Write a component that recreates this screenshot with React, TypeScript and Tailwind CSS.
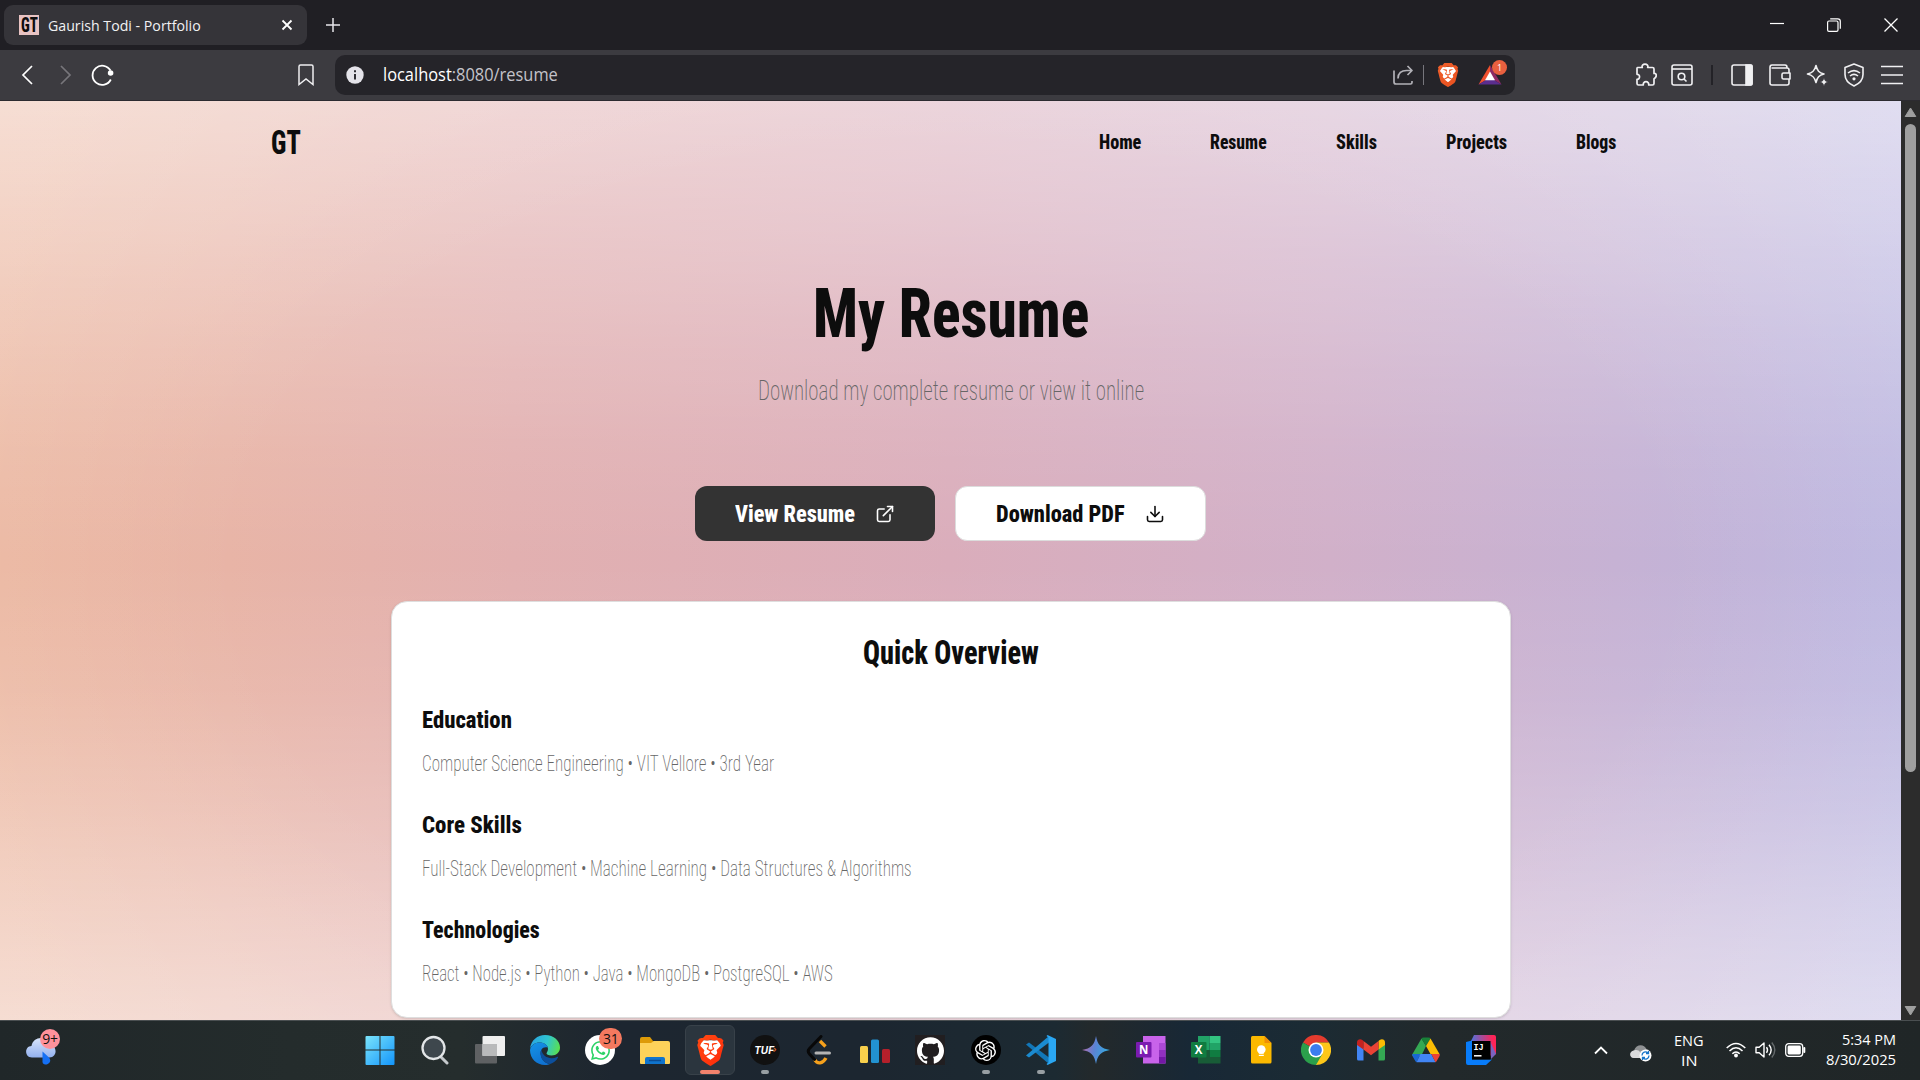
import React, { useLayoutEffect, useRef, useState } from "react";
import { SiBrave, SiGithub, SiOpenai, SiWhatsapp } from "react-icons/si";
import { Download, ExternalLink } from "lucide-react";

type FitProps = { className: string; children: React.ReactNode };

/* Squeezes one line of text to the width that its class gives it. */
function Fit({ className, children }: FitProps) {
  const outer = useRef<HTMLSpanElement>(null);
  const inner = useRef<HTMLSpanElement>(null);
  const [scale, setScale] = useState(1);
  useLayoutEffect(() => {
    if (outer.current && inner.current) {
      setScale(outer.current.offsetWidth / inner.current.offsetWidth);
    }
  }, []);
  return (
    <span ref={outer} className={"block shrink-0 " + className}>
      <span ref={inner} className="inline-block origin-left whitespace-nowrap" style={{ transform: `scaleX(${scale})` }}>
        {children}
      </span>
    </span>
  );
}

const heavy = "font-['Roboto',sans-serif] font-extrabold [font-stretch:75%] text-[#0d0d0d] ";
const light = "font-['Roboto',sans-serif] font-extralight [font-stretch:75%] text-[#666666] ";
const ui = "font-['Open_Sans',sans-serif] ";

function TabBar() {
  return (
    <div className="flex h-[50px] items-center bg-[#201f24] text-white">
      <div className="ml-1 flex h-10 w-[303px] items-center rounded-[9px] bg-[#353439] pl-[15px]">
        <div className="flex h-5 w-5 items-center justify-center bg-[#e8c3c3]">
          <Fit className={heavy + "w-[17px] text-[21px] leading-5"}>GT</Fit>
        </div>
        <Fit className={ui + "mb-px ml-[9px] w-[153px] text-[15px] leading-5 text-[#f1f1f3]"}>Gaurish Todi - Portfolio</Fit>
        <svg className="ml-auto mr-[14px]" width="12" height="12" viewBox="0 0 12 12">
          <path d="M1.5 1.5l9 9m0-9l-9 9" stroke="#fff" strokeWidth="1.8" />
        </svg>
      </div>
      <svg className="ml-[19px]" width="14" height="14" viewBox="0 0 14 14">
        <path d="M7 0v14M0 7h14" stroke="#e6e6ea" strokeWidth="1.5" />
      </svg>
      <div className="ml-auto mr-[22px] flex items-center gap-[43px]">
        <svg width="14" height="14" viewBox="0 0 14 14"><path d="M0 5.5h14" stroke="#fff" strokeWidth="1.2" /></svg>
        <svg width="14" height="14" viewBox="0 0 14 14" fill="none" stroke="#fff">
          <rect x=".6" y="3" width="10.4" height="10.4" rx="1.4" strokeWidth="1.2" />
          <path d="M3.2.8h7.6a2.5 2.5 0 0 1 2.5 2.5v7.5" strokeWidth="1.2" />
        </svg>
        <svg width="14" height="14" viewBox="0 0 14 14"><path d="M.5.5l13 13m0-13l-13 13" stroke="#fff" strokeWidth="1.3" /></svg>
      </div>
    </div>
  );
}

function BraveLion({ size, from, to }: { size: number; from: string; to: string }) {
  return (
    <span className="grid place-items-center">
      <svg className="col-start-1 row-start-1" width={size} height={size} viewBox="0 0 24 24">
        <defs>
          <linearGradient id={"bl" + size} x1="0" y1="0" x2="1" y2="1">
            <stop offset="0" stopColor={from} />
            <stop offset="1" stopColor={to} />
          </linearGradient>
        </defs>
        <path d="M5 4h14l1.5 5-3 9-5.500 4-5.500-4-3-9z" fill="#fff" />
      </svg>
      <SiBrave className="col-start-1 row-start-1" size={size} fill={`url(#bl${size})`} />
    </span>
  );
}

function Toolbar() {
  return (
    <div className="flex h-[51px] items-center border-b border-[#2c2b30] bg-[#3c3b40]">
      <svg className="ml-[21px]" width="13" height="20" viewBox="0 0 13 20" fill="none"><path d="M11 1L2 10l9 9" stroke="#fff" strokeWidth="1.7" /></svg>
      <svg className="ml-[25px]" width="13" height="20" viewBox="0 0 13 20" fill="none"><path d="M2 1l9 9-9 9" stroke="#77767b" strokeWidth="1.7" /></svg>
      <svg className="ml-[19px]" width="24" height="22" viewBox="0 0 24 22" fill="none">
        <path d="M19.800 15.500A9.600 9.600 0 1 1 19.500 6.500" stroke="#fff" strokeWidth="1.8" />
        <circle cx="19.600" cy="9" r="2.800" fill="#fff" />
      </svg>
      <svg className="ml-[183px]" width="16" height="22" viewBox="0 0 16 22" fill="none">
        <path d="M2.500 1h11a1.500 1.500 0 0 1 1.500 1.500V20.500l-7-5.500-7 5.500V2.500A1.500 1.500 0 0 1 2.500 1z" stroke="#eeeef0" strokeWidth="1.5" />
      </svg>
      <div className="ml-[21px] flex h-10 w-[1180px] shrink-0 items-center rounded-[10px] bg-[#252429]">
        <svg className="ml-[11px]" width="18" height="18" viewBox="0 0 18 18">
          <circle cx="9" cy="9" r="8.700" fill="#e4e3e9" />
          <path d="M9 8v5.500M9 4.300v2" stroke="#252429" strokeWidth="1.900" />
        </svg>
        <Fit className={ui + "mb-[2px] ml-[19px] w-[175px] text-[18px] leading-6 text-[#c4c3ca]"}>
          <span className="text-white">localhost</span>:8080/resume
        </Fit>
        <svg className="ml-auto" width="21" height="20" viewBox="0 0 21 20" fill="none" stroke="#b2b1b7" strokeWidth="1.700" strokeLinejoin="round">
          <path d="M1 5.500V17a2 2 0 0 0 2 2h14.500a1.500 1.500 0 0 0 1.500-1.500V16" />
          <path d="M5 13.500C5 8 8.500 5.500 13.500 5.500H19M14.500 1L19 5.500 14.500 10" />
        </svg>
        <div className="ml-[9px] h-5 w-[1.5px] bg-[#77767c]" />
        <div className="ml-3"><BraveLion size={24} from="#f0602c" to="#e8501e" /></div>
        <div className="relative ml-[18px] mr-[13px] h-6 w-6">
          <svg width="24" height="24" viewBox="0 0 24 24">
            <path d="M12 2L.5 21.500 8 17l4-7.500z" fill="#f0502f" />
            <path d="M12 2l11.500 19.500L16 17l-4-7.500z" fill="#8e2a63" />
            <path d="M.5 21.500h23L16 17H8z" fill="#5b2d8e" />
            <path d="M12 8.500l5 8.800H7z" fill="#fff" />
          </svg>
          <div className="absolute -top-[3px] left-[14px] flex h-[15px] w-[15px] items-center justify-center rounded-full bg-[#e8603f] font-['Open_Sans',sans-serif] text-[9px] leading-none text-white">1</div>
        </div>
      </div>
      <div className="ml-auto mr-[17px] flex items-center">
        <svg width="22" height="24" viewBox="0 0 22 24" fill="none" stroke="#f0f0f2" strokeWidth="1.700" strokeLinejoin="round">
          <path d="M2.500 4.500H7.300C6.500 2.500 8 1.200 10 1.200s3.500 1.300 2.700 3.300h4.800a1.500 1.500 0 0 1 1.500 1.500v4.500c3-.8 3 4 0 5.300v4.700a1.500 1.500 0 0 1-1.500 1.500h-3.800c.3-2-1-3.300-2.700-3.300s-3 1.300-2.700 3.300H3.500A1.500 1.500 0 0 1 2 20.500v-4.200c3.400.3 3.400-5.300 0-5V5z" />
        </svg>
        <svg className="ml-[14px]" width="22" height="22" viewBox="0 0 22 22" fill="none" stroke="#f0f0f2" strokeWidth="1.600">
          <rect x="1" y="1" width="20" height="20" rx="2" /><path d="M1 5h20" /><circle cx="10.500" cy="12.500" r="3.300" /><path d="M13 15l2.500 2.500" />
        </svg>
        <div className="ml-[18px] h-5 w-[2px] bg-[#232227]" />
        <svg className="ml-[18px]" width="22" height="22" viewBox="0 0 22 22" fill="none" stroke="#f0f0f2" strokeWidth="1.600">
          <rect x="1" y="1" width="20" height="20" rx="2" /><path d="M15 1h5q1 0 1 1v18q0 1-1 1h-5z" fill="#f0f0f2" />
        </svg>
        <svg className="ml-[16px]" width="22" height="22" viewBox="0 0 22 22" fill="none" stroke="#f0f0f2" strokeWidth="1.600" strokeLinejoin="round">
          <path d="M1 3.500V19a2 2 0 0 0 2 2h15a2 2 0 0 0 2-2V6a2 2 0 0 0-2-2H2.500M1 3.500C1 2 2 1 3 1h13q2 0 2 2.500" /><path d="M21 9h-6.500a1.500 1.500 0 0 0-1.500 1.500v3a1.500 1.500 0 0 0 1.500 1.500H21z" fill="#3c3b40" />
        </svg>
        <svg className="ml-[15px]" width="23" height="23" viewBox="0 0 23 23" fill="none" stroke="#f0f0f2" strokeWidth="1.600" strokeLinejoin="round">
          <path d="M10 1.500c1.200 5.300 3 7.200 8 8.500-5 1.300-6.800 3.200-8 8.500-1.200-5.300-3.500-7.200-8.500-8.500 5-1.300 7.300-3.200 8.500-8.500z" />
          <path d="M18 14c.6 2.500 1.300 3.200 4 4-2.700.8-3.400 1.500-4 4-.6-2.500-1.300-3.200-4-4 2.700-.8 3.400-1.500 4-4z" fill="#f0f0f2" stroke="#3c3b40" strokeWidth=".5" />
        </svg>
        <svg className="ml-[15px]" width="20" height="24" viewBox="0 0 20 24" fill="none" stroke="#f0f0f2" strokeWidth="1.600">
          <path d="M10 1l9 3.500v7c0 5.500-4 9.300-9 11.500-5-2.200-9-6-9-11.500v-7z" strokeLinejoin="round" />
          <path d="M4 10q6-4.800 12 0M6 13q4-3.200 8 0" /><circle cx="10" cy="15.800" r="1.600" fill="#f0f0f2" stroke="none" />
        </svg>
        <svg className="ml-[17px]" width="22" height="20" viewBox="0 0 22 20" fill="none" stroke="#f0f0f2" strokeWidth="1.600"><path d="M0 1.500h22M0 10h22M0 18.500h22" /></svg>
      </div>
    </div>
  );
}

const navItems = [
  ["Home", "w-[42px]"],
  ["Resume", "w-[57px]"],
  ["Skills", "w-[41px]"],
  ["Projects", "w-[61px]"],
  ["Blogs", "w-[40px]"],
];

const sections = [
  ["Education", "w-[90px]", "Computer Science Engineering • VIT Vellore • 3rd Year", "w-[352px]"],
  ["Core Skills", "w-[100px]", "Full-Stack Development • Machine Learning • Data Structures & Algorithms", "w-[490px]"],
  ["Technologies", "w-[118px]", "React • Node.js • Python • Java • MongoDB • PostgreSQL • AWS", "w-[411px]"],
];

function Page() {
  return (
    <main className="flex min-w-0 flex-1 flex-col items-center bg-[radial-gradient(ellipse_62%_75%_at_50%_51%,rgba(255,255,255,0)_60%,rgba(255,255,255,0.18)_110%),linear-gradient(180deg,rgba(255,255,255,0.47)_0%,rgba(255,255,255,0.34)_12%,rgba(255,255,255,0.2)_25%,rgba(255,255,255,0.07)_38%,rgba(255,255,255,0)_50%,rgba(255,255,255,0.07)_64%,rgba(255,255,255,0.2)_77%,rgba(255,255,255,0.34)_89%,rgba(255,255,255,0.46)_100%),linear-gradient(90deg,#ebb59e_0%,#e8b4a6_12%,#e2b0b0_27%,#daadbb_50%,#d1b0c9_70%,#c6b2d4_85%,#bab4df_100%)]">
      <header className="flex h-[82px] w-full items-center justify-between pl-[271px] pr-[285px]">
        <Fit className={heavy + "mb-px w-[30px] text-[34px] leading-10"}>GT</Fit>
        <nav className="flex gap-[69px] pt-[2px]">
          {navItems.map(([label, w]) => (
            <Fit key={label} className={heavy + w + " text-[19.5px] leading-6"}>{label}</Fit>
          ))}
        </nav>
      </header>
      <Fit className={heavy + "mt-[91px] w-[276px] text-[68px] leading-[80px]"}>My Resume</Fit>
      <Fit className={light + "mt-[19px] w-[386px] text-[27px] leading-9"}>Download my complete resume or view it online</Fit>
      <div className="mt-[77px] flex gap-5">
        <div className="flex h-[55px] w-[240px] items-center rounded-xl bg-[#333333] pl-10">
          <Fit className="w-[120px] font-['Roboto',sans-serif] text-[24.5px] leading-8 font-extrabold text-white [font-stretch:75%]">View Resume</Fit>
          <ExternalLink className="ml-5 text-white" size={20} strokeWidth={1.9} />
        </div>
        <div className="flex h-[55px] w-[251px] items-center rounded-xl border border-[#dcdcdc] bg-white pl-10">
          <Fit className={heavy + "w-[129px] text-[24.5px] leading-8"}>Download PDF</Fit>
          <Download className="ml-5 text-[#0d0d0d]" size={20} strokeWidth={1.9} />
        </div>
      </div>
      <section className="mt-[60px] flex h-[417px] w-[1120px] flex-col rounded-2xl border border-[#dedede] bg-white px-[30px] pt-[31px] shadow-sm">
        <Fit className={heavy + "w-[176px] self-center text-[33.5px] leading-10"}>Quick Overview</Fit>
        {sections.map(([title, tw, text, w], i) => (
          <div key={title} className="mt-8">
            <Fit className={heavy + tw + " text-[24.5px] leading-[30px]"}>{title}</Fit>
            <Fit className={light + w + " mt-[15px] text-[22px] leading-7"}>{text}</Fit>
          </div>
        ))}
      </section>
    </main>
  );
}

function Scrollbar() {
  return (
    <div className="flex w-[19px] flex-col items-center bg-[#2c2c2c]">
      <svg className="mt-[5px]" width="13" height="12" viewBox="0 0 13 12"><path d="M6.500 2L11.800 10.500H1.200z" fill="#9f9f9f" stroke="#9f9f9f" strokeLinejoin="round" /></svg>
      <div className="mt-[6px] h-[648px] w-[11px] rounded-full bg-[#9f9f9f]" />
      <svg className="mb-[3px] mt-auto" width="13" height="12" viewBox="0 0 13 12"><path d="M6.500 10L11.800 1.500H1.200z" fill="#9f9f9f" stroke="#9f9f9f" strokeLinejoin="round" /></svg>
    </div>
  );
}

const S = (p: { children: React.ReactNode }) => (
  <svg width="30" height="30" viewBox="0 0 30 30" fill="none">{p.children}</svg>
);

const taskIcons: { id: string; icon: React.ReactNode; mark?: "active" | "open" }[] = [
  { id: "start", icon: <S>
    <defs><linearGradient id="win" x1="0" y1="0" x2="30" y2="30" gradientUnits="userSpaceOnUse"><stop stopColor="#7de6fb" /><stop offset="1" stopColor="#1294fb" /></linearGradient></defs>
    <path d="M.5 2Q.5 1 1.500 1H14.500V14.500H.5zM15.500 1H28.500Q29.500 1 29.500 2V14.500H15.500zM.5 15.500H14.500V30H1.500Q.5 30 .5 29zM15.500 15.500H29.500V29Q29.500 30 28.500 30H15.500z" fill="url(#win)" /></S> },
  { id: "search", icon: <S><path d="M21 22l6 6" stroke="#c5c9cc" strokeWidth="3" strokeLinecap="round" /><circle cx="13.500" cy="13" r="11" fill="#3e474d" stroke="#e3e6e8" strokeWidth="2.300" /></S> },
  { id: "tasks", icon: <S>
    <rect x="0" y="9" width="22" height="19.500" rx="1" fill="#5f6163" /><rect x="7.500" y="1" width="22.500" height="20" rx="1" fill="#efefef" /><path d="M7.500 9H22v12H7.500z" fill="#b9babb" /></S> },
  { id: "edge", icon: <S>
    <defs>
      <linearGradient id="e1" x1="2" y1="8" x2="29" y2="16" gradientUnits="userSpaceOnUse"><stop stopColor="#2aa8e0" /><stop offset=".5" stopColor="#2fc5d0" /><stop offset="1" stopColor="#5be04c" /></linearGradient>
      <linearGradient id="e2" x1="4" y1="8" x2="16" y2="30" gradientUnits="userSpaceOnUse"><stop stopColor="#1490e4" /><stop offset="1" stopColor="#0f6fd0" /></linearGradient>
    </defs>
    <path d="M0 14C1 5 7.500 0 15 0c9 0 15 6 15 12.500 0 4.500-3.500 8-8.500 8-3.500 0-5-1.200-5-2.200 0-.8 1.500-1.800 1.500-4.300C18 10 14 7.500 9.500 7.500 5 7.500 1.500 10 0 14z" fill="url(#e1)" />
    <path d="M0 15C1 10 5 7.500 9.500 7.500c4 0 7.500 2 8.300 5-5-1.500-8 2.500-7 7.500 1 5.500 5.500 9 10 8.800C19 29.700 17 30 15 30 6.500 30 0 23.500 0 15z" fill="url(#e2)" />
    <path d="M11.300 14.500C9 20 12 28 20 29c3.500-1 6.500-3.500 8-6.500.3-.8-.3-1-1-.6-6 3-14.500.6-15.700-7.400z" fill="#0c4f9c" /></S> },
  { id: "whatsapp", icon: <div className="relative flex h-[30px] w-[30px] items-center justify-center rounded-full bg-white">
    <SiWhatsapp size={19} className="text-[#2bd366]" />
    <div className="absolute -top-[7px] left-[14px] flex h-[21px] w-[23px] items-center justify-center rounded-full bg-[#f4795f] font-['Open_Sans',sans-serif] text-[14px] leading-none tracking-tight text-[#111]">31</div></div> },
  { id: "files", icon: <S>
    <path d="M0 4q0-2 2-2h8l3 4H28v10H0z" fill="#dd9b08" /><path d="M0 8h11l3-2H28q2 0 2 2V28q0 1-1 1H1q-1 0-1-1z" fill="#fdd25a" /><path d="M5 29v-5q0-2 2-2H23q2 0 2 2v5z" fill="#1074cd" /><path d="M9 25.500H21" stroke="#0b4c94" strokeWidth="1.500" /></S> },
  { id: "brave", mark: "active", icon: <BraveLion size={31} from="#ff4a12" to="#ff2a0a" /> },
  { id: "tuf", mark: "open", icon: <div className="flex h-[30px] w-[30px] items-center justify-center rounded-full bg-[#111] font-['Inter',sans-serif] text-[10px] leading-none font-bold italic text-white">TUF<span className="-ml-px -mt-[2px] text-[8px] text-[#e36a2c]">›</span></div> },
  { id: "leetcode", icon: <S>
    <g transform="translate(1 0)"><path d="M14 6l5.500 5.500" stroke="#f5a01c" strokeWidth="3.400" /><path d="M8.500 24.500c3 5 8 4.500 11.500-1.500" stroke="#f5a01c" strokeWidth="3.400" /><path d="M15 1.500L3.500 13.500q-2.500 2.500 0 5.500l5 5.500" stroke="#080808" strokeWidth="3" strokeLinecap="round" /><path d="M10 18H23.500" stroke="#b3b3b3" strokeWidth="3" strokeLinecap="round" /></g></S> },
  { id: "codeforces", icon: <S>
    <rect x="0" y="11" width="8" height="17" rx="1.500" fill="#f8cf4c" /><rect x="11" y="4.500" width="8" height="23.500" rx="1.500" fill="#2292d1" /><rect x="22" y="14" width="8" height="14" rx="1.500" fill="#b4202b" /></S> },
  { id: "github", icon: <div className="flex h-[30px] w-[30px] items-center justify-center bg-[#211e20]"><SiGithub size={27} className="text-white" /></div> },
  { id: "chatgpt", mark: "open", icon: <div className="flex h-[30px] w-[30px] items-center justify-center rounded-full bg-black"><SiOpenai size={21} className="text-white" /></div> },
  { id: "vscode", mark: "open", icon: <S>
    <path d="M0 9.500L3 7.500 23 22.500V29z" fill="#1277b8" /><path d="M0 20.500l3 2L23 7.500V1z" fill="#1b8bd0" /><path d="M21.500 0L30 4V26l-8.500 4-1-1 2-1.500V2.500l-2-1.500z" fill="#2aa7f3" /></S> },
  { id: "gemini", icon: <S>
    <defs><linearGradient id="gem" x1="1" y1="10" x2="29" y2="16" gradientUnits="userSpaceOnUse"><stop stopColor="#b96aa9" /><stop offset=".45" stopColor="#5b83d4" /><stop offset="1" stopColor="#30aee0" /></linearGradient></defs>
    <path d="M15 1c1.500 9 5 12.500 14 14-9 1.500-12.500 5-14 14C13.500 20 10 16.500 1 15 10 13.500 13.500 10 15 1z" fill="url(#gem)" /></S> },
  { id: "onenote", icon: <S>
    <path d="M7 1H29.500V28.500H7z" fill="#c863ea" /><path d="M23 8h6.500v7H23z" fill="#ad48d6" /><path d="M23 15h6.500v7H23z" fill="#9230c0" /><path d="M23 22h6.500v6.500H23z" fill="#7418a6" /><rect x="0" y="7" width="15.500" height="15.500" rx="1" fill="#7b1bb0" />
    <text x="7.700" y="18.800" textAnchor="middle" fontFamily="Open Sans, sans-serif" fontWeight="700" fontSize="11.500" fill="#fff">N</text></S> },
  { id: "excel", icon: <S>
    <path d="M7 1H18.500v14H7z" fill="#21a366" /><path d="M18.500 1H29.500v7h-11z" fill="#33c481" /><path d="M18.500 8H29.500v7h-11z" fill="#21a366" /><path d="M7 15H18.500v7H7z" fill="#185c37" /><path d="M18.500 15H29.500v7h-11z" fill="#107c41" /><path d="M7 22H29.500v6.500H7z" fill="#185c37" /><rect x="0" y="7" width="15.500" height="15.500" rx="1" fill="#107c41" />
    <text x="7.700" y="18.800" textAnchor="middle" fontFamily="Open Sans, sans-serif" fontWeight="700" fontSize="11.500" fill="#fff">X</text></S> },
  { id: "keep", icon: <S>
    <path d="M6.500 1H18.500L25.500 8V27q0 1.500-1.500 1.500H6.500Q5 28.500 5 27V2.500Q5 1 6.500 1z" fill="#fcb900" /><path d="M18.500 1v7h7z" fill="#f08f05" /><circle cx="15.300" cy="14.500" r="4.300" fill="#fff" /><path d="M12.800 17h5v1.700h-5zM12.800 19.700h5v1.400h-5z" fill="#fff" /></S> },
  { id: "chrome", icon: <S>
    <path d="M15 15L2 7.500A15 15 0 0 1 28 7.500H15z" fill="#e33b2e" /><path d="M15 15V7.500H28A15 15 0 0 1 15 30z" fill="#fdc719" /><path d="M15 15l6.500 3.700L15 30A15 15 0 0 1 2 7.500z" fill="#2b9f4b" /><circle cx="15" cy="15" r="7.500" fill="#fff" /><circle cx="15" cy="15" r="5.900" fill="#3b7ded" /></S> },
  { id: "gmail", icon: <S>
    <path d="M1 8v16q0 1.500 1.500 1.500H7.500V13z" fill="#4285f4" /><path d="M22.500 13v12.500h5q1.500 0 1.500-1.500V8z" fill="#34a853" /><path d="M1 10V7.500C1 4.500 4.300 3.500 6.300 5L7.500 6v8.500z" fill="#c5221f" /><path d="M22.500 6l1.200-1C26 3.500 29 4.500 29 7.500V10l-6.500 4.500z" fill="#fbbc04" /><path d="M7.500 6L15 11.700 22.500 6v8.500L15 20.300 7.500 14.500z" fill="#ea4335" /></S> },
  { id: "drive", icon: <S>
    <path d="M10.500 3.500L1.500 19q-.5 1 0 2h8.700L15 11z" fill="#34a853" /><path d="M10.500 3.500Q11 2.500 12.500 2.500h5q1.500 0 2 1L15 11z" fill="#188038" /><path d="M19.500 3.500l9 15.500H19.500L15 11z" fill="#fbbc04" /><path d="M1.300 19H9.500L5.500 27.200Q4.800 27 4.300 26L1.700 21.500Q1 20 1.300 19z" fill="#1967d2" /><path d="M9.500 19h10.800l4.200 8.200H5.500z" fill="#4285f4" /><path d="M20.300 19h8.500q.3 1-.5 2.500l-2.600 4.500q-.5 1-1.200 1.200z" fill="#ea4335" /></S> },
  { id: "intellij", icon: <S>
    <defs><linearGradient id="ij" x1="6" y1="6" x2="27" y2="4" gradientUnits="userSpaceOnUse"><stop stopColor="#5470d8" /><stop offset="1" stopColor="#ff2457" /></linearGradient></defs>
    <path d="M8 0H28q2 0 2 2V19L19 22 5 6z" fill="url(#ij)" /><path d="M24 6l6 13-5 5z" fill="#7a63c0" /><path d="M0 7L6 5.500V24.500H26L20 30H2q-2 0-2-2z" fill="#087cfa" /><rect x="6" y="6" width="18.500" height="18.500" fill="#000" />
    <path d="M8 20.800h7.500" stroke="#fff" strokeWidth="1.500" />
    <text x="7.500" y="15" fontFamily="Liberation Mono, monospace" fontWeight="700" fontSize="8.500" fill="#fff">IJ</text></S> },
];

function Taskbar() {
  return (
    <div className="flex h-[60px] items-start border-t border-[#4a4f51] bg-[linear-gradient(90deg,#202729_0%,#242c2c_15%,#252d2d_24%,#1d2630_32%,#1c2630_45%,#1c2a32_55%,#23292b_57%,#182836_62%,#1b2b34_68%,#22292b_75%,#202627_100%)] text-white">
      <div className="flex w-[352.5px] shrink-0 items-center">
        <div className="relative ml-[26px] mt-[9px] h-9 w-9">
          <svg width="32" height="36" viewBox="0 0 32 36">
            <defs><linearGradient id="cl" x1="0" y1="0" x2="0" y2="1"><stop stopColor="#d8e4fb" /><stop offset="1" stopColor="#93b1ee" /></linearGradient></defs>
            <path d="M6 27.500C-2 27.500-1.500 16 5.500 16 7 6.500 20 5 22.500 14c9 .5 9.500 13.500 1 13.500z" fill="url(#cl)" /><path d="M16.500 21.500l6.500 6c3.500 4-1 7.500-4 7q-3-.6-2.500-4z" fill="#1570f4" />
          </svg>
          <div className="absolute -top-[1px] left-[14px] flex h-5 w-5 items-center justify-center rounded-full bg-[#ff919b] font-['Open_Sans',sans-serif] text-[14px] leading-none tracking-tight text-[#111]">9+</div>
        </div>
      </div>
      {taskIcons.map(({ id, icon, mark }) => (
        <div key={id} className="relative z-0 flex h-[58px] w-[55.050px] shrink-0 items-center justify-center">
          {mark === "active" && <div className="absolute left-[2px] top-[4px] -z-10 h-[50px] w-[50px] rounded-md border border-[#384149] bg-[#2b353e]" />}
          {icon}
          {mark === "active" && <div className="absolute bottom-[5px] h-1 w-5 rounded-full bg-[#f3826c]" />}
          {mark === "open" && <div className="absolute bottom-[5px] h-1 w-2 rounded-full bg-[#989fa3]" />}
        </div>
      ))}
      <div className="ml-auto mr-6 flex h-[58px] items-center">
        <svg width="14" height="9" viewBox="0 0 14 9" fill="none"><path d="M1 7.500L7 1.500l6 6" stroke="#fff" strokeWidth="1.800" /></svg>
        <svg className="ml-[22px] mt-1" width="22" height="19" viewBox="0 0 22 19">
          <path d="M4 15C-1 15-1 8 4 7.500 6 1 14 .5 16.500 6c3 .5 3.500 3 3 5l-6 4z" fill="#8f9193" /><path d="M4 15C-1 15-1 8 4 7.500c3-1 5 0 6 1.500l2 6z" fill="#d9dadb" />
          <circle cx="15.500" cy="12.500" r="6" fill="#fff" /><path d="M12 12.500a3.500 3.500 0 0 1 6-2.500M19 12.500a3.500 3.500 0 0 1-6 2.500M18.500 8v2.500H16M12.500 17v-2.500H15" stroke="#1674c9" strokeWidth="1.300" fill="none" />
        </svg>
        <div className="ml-[22px] flex w-[30px] flex-col items-center">
          <Fit className={ui + "w-[30px] text-[15px] leading-5"}>ENG</Fit>
          <Fit className={ui + "w-[16px] text-[15px] leading-5"}>IN</Fit>
        </div>
        <svg className="ml-[22px]" width="20" height="16" viewBox="0 0 20 16" fill="none" stroke="#fff" strokeWidth="1.500"><path d="M.7 6Q10-3 19.300 6M3.500 9Q10 2.500 16.500 9M6.300 11.800Q10 8 13.700 11.800" /><circle cx="10" cy="13.500" r="1.900" fill="#fff" stroke="none" /></svg>
        <svg className="ml-[9px]" width="22" height="18" viewBox="0 0 22 18" fill="none" stroke="#fff" strokeWidth="1.400" strokeLinejoin="round"><path d="M1 6.200h3.200L9 2v14l-4.800-4.200H1z" /><path d="M11.500 6.200q2 2.800 0 5.600M14 3.700q4.300 5.300 0 10.600" /><path d="M16.800 1.500q6 7.500 0 15" stroke="#64696b" /></svg>
        <svg className="ml-[8px]" width="21" height="14" viewBox="0 0 21 14" fill="none"><rect x=".7" y=".7" width="17" height="12.600" rx="3" stroke="#fff" strokeWidth="1.300" /><rect x="2.600" y="2.600" width="13.200" height="8.800" rx="1.400" fill="#fff" /><path d="M19.300 5v4" stroke="#fff" strokeWidth="2" strokeLinecap="round" /></svg>
        <div className="mb-[2px] ml-5 flex w-[70px] flex-col items-end">
          <Fit className={ui + "w-[54px] text-[15px] leading-5"}>5:34 PM</Fit>
          <Fit className={ui + "w-[70px] text-[15px] leading-5"}>8/30/2025</Fit>
        </div>
      </div>
    </div>
  );
}

export default function App() {
  return (
    <div className="flex h-[1080px] w-[1920px] flex-col overflow-hidden">
      <TabBar />
      <Toolbar />
      <div className="flex h-[919px]">
        <Page />
        <Scrollbar />
      </div>
      <Taskbar />
    </div>
  );
}
